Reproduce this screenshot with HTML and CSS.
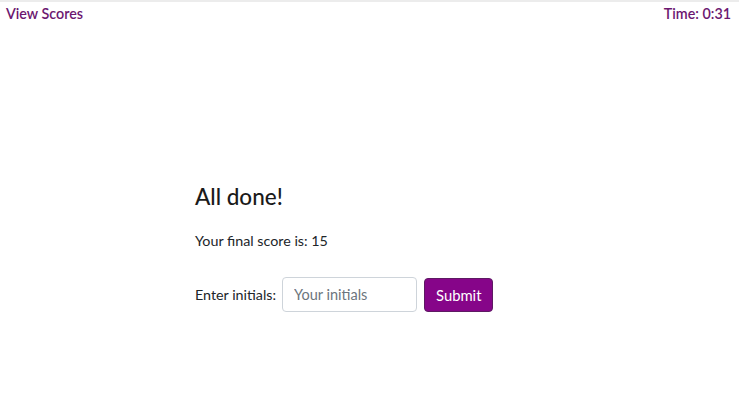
FILE: index.html
```html
<!DOCTYPE html>
<html>
<head>
<meta charset="utf-8">
<link rel="stylesheet" href="styles.css">
</head>
<body>
<header class="topbar">
  <a class="view-scores" href="#">View Scores</a>
  <span class="timer">Time: 0:31</span>
</header>
<main class="quiz">
  <section class="done">
    <h2 class="title">All done!</h2>
    <p class="score">Your final score is: 15</p>
    <form class="entry">
      <label class="label" for="initials">Enter initials:</label>
      <input class="initials" id="initials" type="text" placeholder="Your initials">
      <button class="submit" type="button">Submit</button>
    </form>
  </section>
</main>
</body>
</html>
```
FILE: styles.css
```css
html, body {
  margin: 0;
  padding: 0;
  background: #fff;
}
body {
  font-family: "Segoe UI", "Lato", "Noto Sans", sans-serif;
  color: #212529;
  width: 739px;
  height: 413px;
  overflow: hidden;
  border-top: 2px solid #ececec;
  box-sizing: border-box;
}
.topbar {
  display: flex;
  justify-content: space-between;
  align-items: center;
  padding: 3px 8px 0 6px;
  font-size: 14.3px;
  font-weight: 600;
  color: #6c1770;
}
.view-scores {
  color: #6c1770;
  text-decoration: none;
}
.quiz {
  display: flex;
  justify-content: center;
  padding-top: 161px;
}
.done {
  width: 349px;
}
.title {
  margin: 0 0 20px;
  font-size: 22.5px;
  font-weight: 500;
  line-height: 1.2;
  color: #1a1a1a;
}
.score {
  margin: 0 0 26px;
  font-size: 14.3px;
  line-height: 1.5;
}
.entry {
  display: flex;
  align-items: center;
  gap: 7px;
}
.label {
  font-size: 14.3px;
}
.initials {
  width: 135px;
  height: 35px;
  box-sizing: border-box;
  border: 1px solid #ced4da;
  border-radius: 4px;
  padding: 4px 11px;
  margin-left: -1px;
  font-family: inherit;
  font-size: 14.5px;
  color: #495057;
}
.initials::placeholder {
  color: #6c757d;
}
.submit {
  height: 34px;
  padding: 0 11px;
  border: 1px solid #5e1a63;
  border-radius: 4px;
  background: #860589;
  color: #fff;
  font-family: inherit;
  font-size: 14.8px;
}
```
